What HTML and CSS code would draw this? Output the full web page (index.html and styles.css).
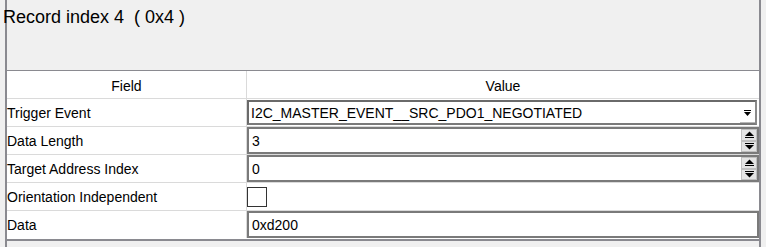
FILE: index.html
```html
<!DOCTYPE html>
<html lang="en">
<head>
    <meta charset="UTF-8">
    <meta name="viewport" content="width=device-width, initial-scale=1.0">
    <title>Record index 4</title>
    <link rel="stylesheet" href="styles.css">
</head>
<body>
    <div class="panel">
        <div class="title">Record index 4&nbsp; ( 0x4 )</div>
        <div class="grid">
            <div class="head field">Field</div>
            <div class="head value">Value</div>

            <div class="field">Trigger Event</div>
            <div class="value">
                <div class="combo">
                    <span class="text">I2C_MASTER_EVENT__SRC_PDO1_NEGOTIATED</span>
                    <span class="drop">
                        <svg width="9" height="7" viewBox="0 0 9 7"><rect x="1" y="0" width="7" height="1" fill="#000"/><path d="M1 2h7L4.5 6z" fill="#000"/></svg>
                    </span>
                </div>
            </div>

            <div class="field">Data Length</div>
            <div class="value">
                <div class="box spin">
                    <span class="text">3</span>
                    <span class="buttons">
                        <span class="btn"><svg width="11" height="7" viewBox="0 0 11 7"><path d="M1 5h9L5.5 0.5z" fill="#000"/><rect x="1" y="6" width="9" height="1" fill="#000"/></svg></span>
                        <span class="btn"><svg width="11" height="7" viewBox="0 0 11 7"><rect x="1" y="0" width="9" height="1" fill="#000"/><path d="M1 2h9L5.5 6.5z" fill="#000"/></svg></span>
                    </span>
                </div>
            </div>

            <div class="field">Target Address Index</div>
            <div class="value">
                <div class="box spin">
                    <span class="text">0</span>
                    <span class="buttons">
                        <span class="btn"><svg width="11" height="7" viewBox="0 0 11 7"><path d="M1 5h9L5.5 0.5z" fill="#000"/><rect x="1" y="6" width="9" height="1" fill="#000"/></svg></span>
                        <span class="btn"><svg width="11" height="7" viewBox="0 0 11 7"><rect x="1" y="0" width="9" height="1" fill="#000"/><path d="M1 2h9L5.5 6.5z" fill="#000"/></svg></span>
                    </span>
                </div>
            </div>

            <div class="field">Orientation Independent</div>
            <div class="value">
                <div class="check"></div>
            </div>

            <div class="field last">Data</div>
            <div class="value last">
                <div class="box">
                    <span class="text">0xd200</span>
                </div>
            </div>
        </div>
    </div>
</body>
</html>
```

FILE: styles.css
```css
html, body {
    margin: 0;
    padding: 0;
}
body {
    width: 766px;
    height: 247px;
    overflow: hidden;
    background-color: #f0f0f0;
    font-family: 'Liberation Sans', Arial, sans-serif;
    color: #000000;
}
.panel {
    margin-left: 5px;
    width: 752px;
    height: 247px;
    border-left: 2px solid #8a8a90;
    border-right: 2px solid #8a8a90;
}
.title {
    height: 62px;
    padding-top: 8px;
    font-size: 18px;
    line-height: 18px;
    margin-left: -4px;
}
.grid {
    display: grid;
    grid-template-columns: 240px 512px;
    grid-auto-rows: 28px;
    background-color: #ffffff;
    border-top: 1px solid #8a8a90;
    border-bottom: 2px solid #8a8a90;
    font-size: 14px;
}
.field, .value {
    box-sizing: border-box;
    border-bottom: 1px solid #dadada;
    display: flex;
    align-items: center;
}
.field {
    border-right: 1px solid #dadada;
}
.last {
    border-bottom: none;
    height: 27px;
}
.head {
    justify-content: center;
    padding-top: 2px;
}
.combo, .box {
    box-sizing: border-box;
    width: 100%;
    height: 100%;
    display: flex;
    align-items: center;
    border: 2px solid #7a7a7a;
    background-color: #ffffff;
}
.combo {
    height: 25px;
    align-self: flex-start;
    margin-top: 1px;
    width: 510px;
    border-color: #6a6a6a #8a8a8a #7a7a7a #6a6a6a;
}
.text {
    flex: 1;
    padding-left: 3px;
    white-space: nowrap;
}
.combo .text {
    padding-left: 2px;
}
.drop {
    box-sizing: border-box;
    width: 15px;
    height: 100%;
    display: flex;
    align-items: center;
    justify-content: center;
    padding-top: 2px;
    border-bottom: 1px solid #b8b8b8;
}
.box {
    width: 512px;
}
.spin .buttons {
    display: flex;
    flex-direction: column;
    width: 16px;
    height: 23px;
}
.btn {
    box-sizing: border-box;
    flex: 1;
    display: flex;
    align-items: center;
    justify-content: center;
    background-color: #e4e4e4;
    border: 1px solid #c0c0c0;
}
.check {
    box-sizing: border-box;
    width: 20px;
    height: 20px;
    border: 1px solid #333333;
    background-color: #ffffff;
}
```
